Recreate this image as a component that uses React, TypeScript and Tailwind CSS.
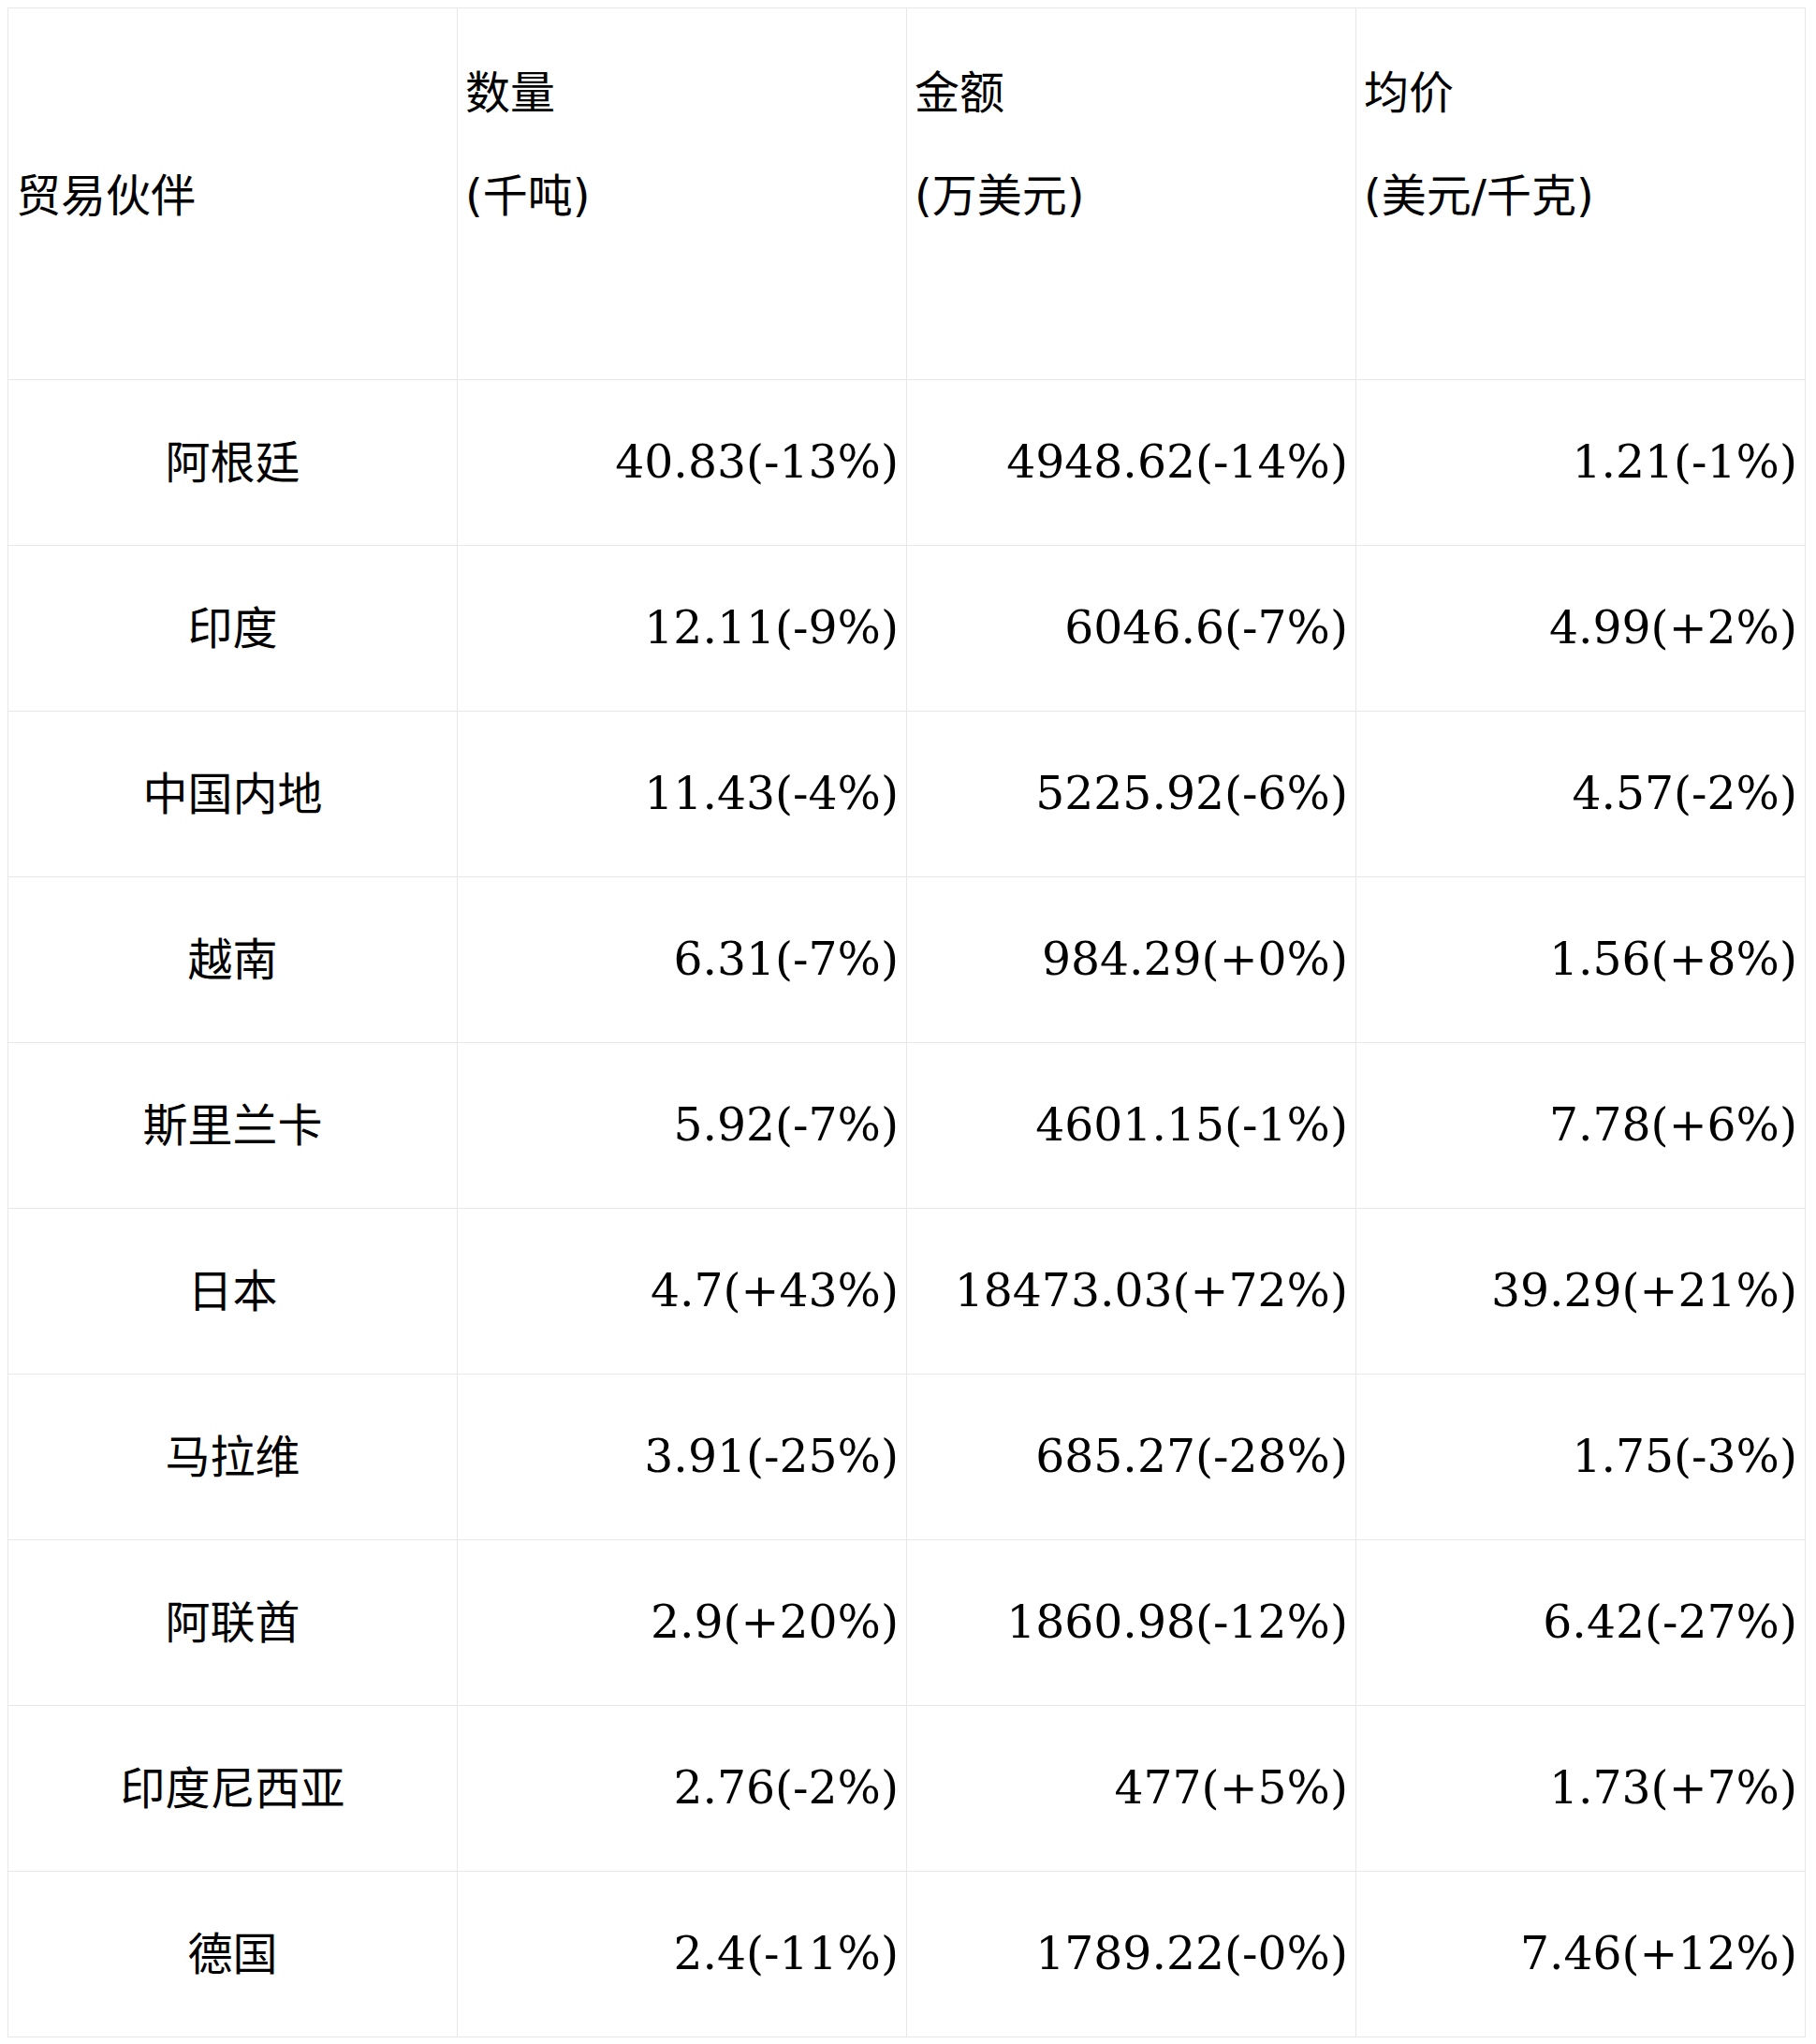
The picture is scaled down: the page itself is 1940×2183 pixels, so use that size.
const headers = [
  { lines: ['贸易伙伴'] },
  { lines: ['数量', '(千吨)', '\u00a0'] },
  { lines: ['金额', '(万美元)', '\u00a0'] },
  { lines: ['均价', '(美元/千克)', '\u00a0'] },
];

const rows = [
  ['阿根廷', '40.83(-13%)', '4948.62(-14%)', '1.21(-1%)'],
  ['印度', '12.11(-9%)', '6046.6(-7%)', '4.99(+2%)'],
  ['中国内地', '11.43(-4%)', '5225.92(-6%)', '4.57(-2%)'],
  ['越南', '6.31(-7%)', '984.29(+0%)', '1.56(+8%)'],
  ['斯里兰卡', '5.92(-7%)', '4601.15(-1%)', '7.78(+6%)'],
  ['日本', '4.7(+43%)', '18473.03(+72%)', '39.29(+21%)'],
  ['马拉维', '3.91(-25%)', '685.27(-28%)', '1.75(-3%)'],
  ['阿联酋', '2.9(+20%)', '1860.98(-12%)', '6.42(-27%)'],
  ['印度尼西亚', '2.76(-2%)', '477(+5%)', '1.73(+7%)'],
  ['德国', '2.4(-11%)', '1789.22(-0%)', '7.46(+12%)'],
];

export default function App() {
  return (
    <div className="min-h-screen bg-white p-2 text-black">
      <div className="grid w-[1921px] grid-cols-[repeat(4,480px)] border-l border-t border-[#e5e7eb]">
        {/* header */}
        {headers.map((h, i) => (
          <div
            key={i}
            className="flex h-[397px] flex-col justify-center border-b border-r border-[#e5e7eb] px-2 pt-[3px] text-left font-['DejaVu_Sans','Noto_Sans_CJK_SC',sans-serif] text-[48px] font-normal"
          >
            {h.lines.map((l, j) => (
              <div key={j} className="leading-[110px] whitespace-nowrap">
                {l}
              </div>
            ))}
          </div>
        ))}

        {/* body */}
        {rows.map((r) =>
          r.map((cell, j) => (
            <div
              key={r[0] + j}
              className={
                j === 0
                  ? "flex h-[177px] items-center justify-center border-b border-r border-[#e5e7eb] px-2 font-['DejaVu_Serif','Noto_Sans_CJK_SC',serif] text-[48px] leading-[56px]"
                  : "flex h-[177px] items-center justify-end border-b border-r border-[#e5e7eb] px-2 font-['DejaVu_Serif','Noto_Sans_CJK_SC',serif] text-[48.8px] leading-[56px] whitespace-nowrap"
              }
            >
              {cell}
            </div>
          ))
        )}
      </div>
    </div>
  );
}
